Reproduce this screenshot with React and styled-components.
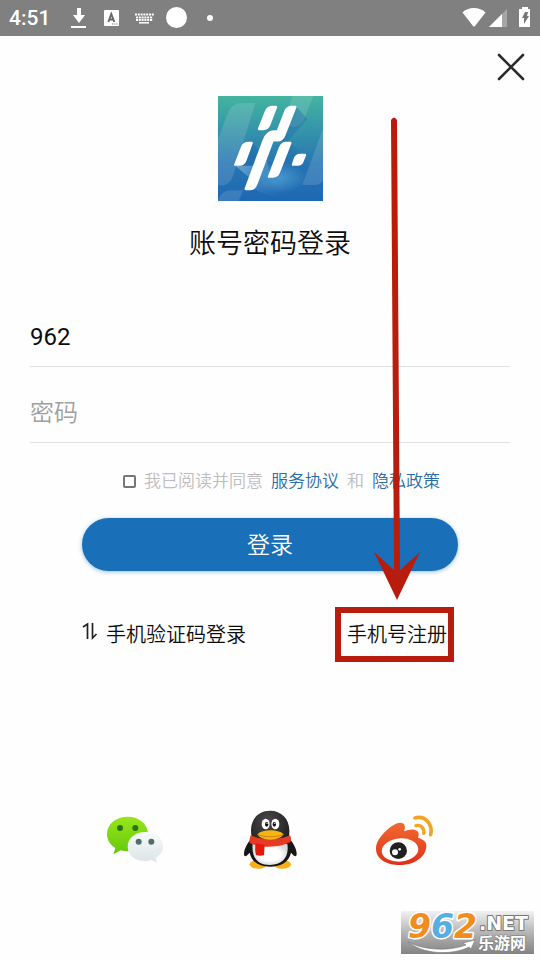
import React, { useState } from 'react'
import styled, { createGlobalStyle } from 'styled-components'

const theme = {
  primary: '#1a70b8',
  link: '#2a6ca5',
  text: '#0c0c0c',
  muted: '#bdbdbd',
  line: '#e2e2e2',
  mark: '#b81c0d',
}

const GlobalStyle = createGlobalStyle`
  * {
    box-sizing: border-box;
  }
  body {
    margin: 0;
    background: #fefefe;
    color: ${theme.text};
    font-family: Roboto, 'Noto Sans CJK SC', sans-serif;
    font-weight: 350;
  }
  button, input {
    font-family: inherit;
    font-weight: inherit;
    color: inherit;
    margin: 0;
  }
`

const Page = styled.div`
  min-height: 100vh;
  display: flex;
  flex-direction: column;
`

const StatusBar = styled.header`
  height: 36px;
  padding: 0 8px;
  display: flex;
  align-items: center;
  justify-content: space-between;
  background: #808080;
  color: #fff;
`

const StatusGroup = styled.div`
  display: flex;
  align-items: center;
`

const Clock = styled.time`
  width: 56px;
  padding-left: 1px;
  font-size: 21px;
  line-height: 36px;
  font-weight: 500;
`

const TopBar = styled.div`
  display: flex;
  justify-content: flex-end;
  padding: 13px 11px 0;
`

const CloseButton = styled.button`
  width: 36px;
  height: 36px;
  padding: 0;
  border: 0;
  background: none;
  cursor: pointer;
`

const Main = styled.main`
  flex: 1;
  display: flex;
  flex-direction: column;
`

const Brand = styled.div`
  display: flex;
  flex-direction: column;
  align-items: center;
  margin-top: 11px;
`

const Title = styled.h1`
  margin: 23px 0 0;
  font-size: 27px;
  line-height: 40px;
  font-weight: inherit;
`

const Form = styled.form`
  display: flex;
  flex-direction: column;
  margin-top: 44px;
`

const Fields = styled.div`
  display: flex;
  flex-direction: column;
  gap: 17px;
  padding: 0 30px;
`

const Field = styled.input`
  width: 100%;
  height: 59px;
  padding: 0;
  border: 0;
  border-bottom: 1px solid ${theme.line};
  border-radius: 0;
  outline: 0;
  background: none;
  font-size: 24px;
  font-weight: 400;

  &::placeholder {
    color: #a0a0a0;
    font-weight: 350;
    opacity: 1;
  }
`

const Agreement = styled.div`
  display: flex;
  align-items: center;
  justify-content: flex-end;
  gap: 8px;
  margin-top: 26px;
  padding: 0 100px;
  font-size: 17px;
  line-height: 24px;
  color: ${theme.muted};
  white-space: nowrap;
`

const AgreementLabel = styled.label`
  display: flex;
  align-items: center;
  gap: 8px;
`

const Checkbox = styled.input`
  appearance: none;
  width: 13px;
  height: 13px;
  border: 2px solid #777;
  border-radius: 2px;
  background: ${props => (props.checked ? theme.primary : '#fff')};
`

const AgreementLink = styled.a`
  color: ${theme.link};
  text-decoration: none;
`

const SubmitButton = styled.button`
  height: 53px;
  margin: 25px 82px 0;
  padding: 0 0 3px;
  border: 0;
  border-radius: 27px;
  background: ${theme.primary};
  box-shadow: 0 1px 4px rgba(26, 112, 184, 0.45);
  color: #fff;
  font-size: 23px;
  cursor: pointer;
`

const Options = styled.div`
  display: flex;
  justify-content: space-between;
  margin-top: 49px;
  padding: 0 93px 0 82px;
`

const OptionLink = styled.a`
  position: relative;
  display: flex;
  align-items: center;
  gap: 8px;
  font-size: 20px;
  line-height: 30px;
  color: ${theme.text};
  text-decoration: none;
  white-space: nowrap;
`

const Highlight = styled.span`
  position: absolute;
  inset: -13px -7px -12px -12px;
  border: 6px solid ${theme.mark};
  pointer-events: none;
`

const Pointer = styled.svg`
  position: absolute;
  right: 26px;
  bottom: 49px;
  pointer-events: none;
`

const Social = styled.nav`
  display: grid;
  grid-template-columns: repeat(3, 1fr);
  justify-items: center;
  margin-top: 160px;
  padding: 0 12.5%;
`

const SocialButton = styled.button`
  width: 60px;
  height: 60px;
  padding: 0;
  border: 0;
  background: none;
  cursor: pointer;
`

const Footer = styled.footer`
  display: flex;
  justify-content: flex-end;
  margin-top: auto;
  padding: 0 6px 6px;
`

const DownloadIcon = () => (
  <svg width="40" height="36" viewBox="64 0 40 36" fill="#fff">
    <path d="M77 8h4v7h4l-6 8-6-8h4zM71 26h15v2H71z" />
  </svg>
)

const InputMethodIcon = () => (
  <svg width="26" height="36" viewBox="104 0 26 36">
    <rect x="104" y="10" width="15" height="16" rx="1" fill="#fff" />
    <path d="M108.300 22l3-8 3 8M109.500 19.500h4" fill="none" stroke="#666" strokeWidth="1.900" />
    <path d="M112 24h1.200m1 0h1.200m1 0h1.200" stroke="#777" strokeWidth="1.200" />
  </svg>
)

const KeyboardIcon = () => (
  <svg width="36" height="36" viewBox="130 0 36 36" fill="none" stroke="#fff">
    <path d="M135 14.500h19M136 17.500h17M136 20h17" strokeWidth="1.800" strokeDasharray="2 .8" />
    <path d="M139 22.800h10" strokeWidth="1.500" />
  </svg>
)

const DotsIcon = () => (
  <svg width="60" height="36" viewBox="166 0 60 36" fill="#fff">
    <circle cx="176.500" cy="17.500" r="10.500" />
    <circle cx="210" cy="18" r="3" />
  </svg>
)

const SignalIcons = () => (
  <svg width="72" height="36" viewBox="460 0 72 36">
    <path d="M462.500 12.500C468 6.500 480 6.500 485.500 12.500L475 26q-1 1-2 0z" fill="#fff" />
    <path d="M489 27l18-18v18z" fill="#a6a6a6" />
    <path d="M489 27l13-13v13z" fill="#fff" />
    <path d="M522 7h6v2h2v18h-11V9h3z" fill="#fff" />
    <path d="M525 12h3l-1 4h2l-5 8v-6h-2z" fill="#777" />
  </svg>
)

const CloseIcon = () => (
  <svg width="36" height="36" viewBox="0 0 36 36" stroke="#2b2b2b" strokeWidth="2.600" strokeLinecap="round">
    <path d="M6 6l24 24M30 6L6 30" />
  </svg>
)

const Logo = () => (
  <svg width="105" height="105" viewBox="36 33 315 315">
    <defs>
      <linearGradient id="logo-bg" x1="0" y1="0" x2="0" y2="1">
        <stop offset="0" stopColor="#43b49f" />
        <stop offset=".3" stopColor="#3697a9" />
        <stop offset=".65" stopColor="#2775b3" />
        <stop offset="1" stopColor="#1e68b2" />
      </linearGradient>
      <linearGradient id="logo-shade" x1="0" y1="0" x2="1" y2="1">
        <stop offset="0" stopColor="#1b64a7" stopOpacity=".7" />
        <stop offset="1" stopColor="#1b64a7" stopOpacity="0" />
      </linearGradient>
      <linearGradient id="logo-glow" x1="0" y1="0" x2="1" y2=".7">
        <stop offset="0" stopColor="#8dbfdd" stopOpacity=".75" />
        <stop offset="1" stopColor="#4d9bd0" stopOpacity="0" />
      </linearGradient>
      <radialGradient id="logo-light">
        <stop offset="0" stopColor="#58a7da" stopOpacity=".7" />
        <stop offset="1" stopColor="#58a7da" stopOpacity="0" />
      </radialGradient>
    </defs>
    <path fill="url(#logo-bg)" d="M36 33h315v315H36z" />
    <path fill="#fff" opacity=".13" d="M148 54H104c-18 0-32 13-40 34L36 163v138h10c18 0 28-10 35-28zM260 33h62l-26 65c-8 20-20 27-36 27h-34zM351 130l-62 170h35c12 0 20-4 27-12zM36 348c6-24 23-32 38-32h38l-14 32z" />
    <path fill="url(#logo-shade)" d="M270 64l34 38-62 70-24-10zM138 172l38 48-20 60-60-38zM254 172l64 68-80 60-48-24z" />
    <path fill="url(#logo-glow)" d="M88 242h60l-20 34zM140 312l42-88 10 50 60 34-40 30z" />
    <ellipse cx="222" cy="278" rx="80" ry="46" fill="url(#logo-light)" />
    <path
      fill="#fff"
      stroke="#fff"
      strokeWidth="7"
      strokeLinejoin="round"
      d="M210 66l-20 53c-4 11-11 13-18 13h-13l21-53c5-10 12-13 19-13zM268 66l-33 84c-5 13-11 16-21 16h-14l-49 131c-4 11-11 15-19 15h-13l54-146c8-20 17-27 32-27h10l23-60c5-10 12-13 19-13zM137 174l-19 52c-4 11-11 13-18 13H88l20-52c5-11 12-13 19-13zM253 174l-34 87c-4 12-11 14-18 14h-12l33-87c5-11 12-14 19-14zM297 210l-8 20c-3 8-9 9-14 9h-14l5-16c4-11 10-13 16-13z"
    />
  </svg>
)

const SwitchIcon = () => (
  <svg width="16" height="30" viewBox="0 0 16 30" fill="none" stroke="#222" strokeWidth="1.700">
    <path d="M1 7l4.500-3v15M10.500 3v15l4-4" />
  </svg>
)

const WechatIcon = () => (
  <svg width="60" height="60" viewBox="30 30 180 180">
    <defs>
      <linearGradient id="wx-green" x1="0" y1="0" x2="0" y2="1">
        <stop offset="0" stopColor="#99e51c" />
        <stop offset="1" stopColor="#62c90b" />
      </linearGradient>
      <linearGradient id="wx-white" x1="0" y1="0" x2="0" y2="1">
        <stop offset="0" stopColor="#f7fafb" />
        <stop offset="1" stopColor="#dce4e7" />
      </linearGradient>
    </defs>
    <path fill="url(#wx-green)" d="M98 50c-36 0-62 23-62 52 0 18 9 32 25 42l-6 19 22-12c7 2 14 3 22 3 35 0 60-23 60-52S133 50 98 50z" />
    <circle cx="75" cy="84" r="9" fill="#287316" />
    <circle cx="121" cy="84" r="9" fill="#287316" />
    <path fill="url(#wx-white)" d="M151 96c-31 0-53 19-53 44s22 43 53 43c7 0 13-1 19-3l16 8-4-15c14-8 22-19 22-33 0-25-22-44-53-44z" />
    <circle cx="131" cy="125" r="9" fill="#526c69" />
    <circle cx="169" cy="125" r="9" fill="#526c69" />
  </svg>
)

const QQIcon = () => (
  <svg width="60" height="60" viewBox="30 30 180 180">
    <defs>
      <radialGradient id="qq-black" cx=".45" cy=".2" r=".8">
        <stop offset="0" stopColor="#4b4b4b" />
        <stop offset=".7" stopColor="#161616" />
      </radialGradient>
      <radialGradient id="qq-belly">
        <stop offset=".6" stopColor="#fff" />
        <stop offset="1" stopColor="#dcdcdc" />
      </radialGradient>
    </defs>
    <ellipse cx="85" cy="193" rx="26" ry="13" fill="#f9ae12" />
    <ellipse cx="157" cy="193" rx="26" ry="13" fill="#f9ae12" />
    <path fill="url(#qq-black)" d="M120 32c-34 0-57 24-57 59 0 8 1 15 2 22-12 15-23 34-23 48 0 10 5 11 17-3 5 27 28 42 61 42s57-15 63-42c12 14 17 13 17 3 0-15-11-34-24-48 2-7 2-14 2-22 0-35-24-59-58-59z" />
    <path fill="url(#qq-belly)" d="M68 132c-4 40 14 63 52 63s58-24 52-63z" />
    <path fill="#e63b22" d="M62 106c26 14 88 15 118 0 4 8 4 15 1 20-30 17-88 19-122 3-1-8 0-15 3-23z" />
    <path fill="#e4190e" d="M77 130l27 4-2 32c-8 2-18 2-24-1-3-9-3-23-1-35z" />
    <ellipse cx="107" cy="72" rx="12" ry="16" fill="#fff" />
    <ellipse cx="136" cy="72" rx="12" ry="16" fill="#fff" />
    <ellipse cx="110" cy="73" rx="5" ry="7" fill="#111" />
    <ellipse cx="133" cy="73" rx="5" ry="7" fill="#111" />
    <circle cx="111" cy="70" r="2" fill="#fff" />
    <circle cx="134" cy="70" r="2" fill="#fff" />
    <path fill="#f9b414" d="M82 103c9-9 24-12 39-12s31 3 40 12c-8 11-22 16-40 16s-33-5-39-16z" />
    <path fill="none" stroke="#b46b08" strokeWidth="2" d="M84 104c21 8 52 9 75 0" />
  </svg>
)

const WeiboIcon = () => (
  <svg width="60" height="60" viewBox="30 30 180 180">
    <defs>
      <linearGradient id="wb-red" x1="0" y1="0" x2="0" y2="1">
        <stop offset="0" stopColor="#f26a31" />
        <stop offset="1" stopColor="#df3019" />
      </linearGradient>
    </defs>
    <path fill="url(#wb-red)" d="M113 70c8 4 8 14 4 24 13-6 31-9 40-1 5 5 5 12 2 20 13 4 25 10 25 25 0 31-34 57-78 57-43 0-73-19-73-49 0-20 14-39 32-55 17-15 36-27 48-21z" />
    <ellipse cx="105" cy="150" rx="55" ry="35" fill="#fff" transform="rotate(-5 105 150)" />
    <ellipse cx="100" cy="152" rx="26" ry="25" fill="#202020" />
    <circle cx="90" cy="157" r="9" fill="#fff" />
    <circle cx="104" cy="148" r="4" fill="#fff" />
    <path fill="none" stroke="#f3a325" strokeWidth="11" strokeLinecap="round" d="M150 54c30-8 54 18 47 50" />
    <path fill="none" stroke="#f3a325" strokeWidth="10" strokeLinecap="round" d="M153 77c15-4 26 9 23 23" />
  </svg>
)

const SiteMark = () => (
  <svg width="133" height="50" viewBox="0 -7 133 50" role="img" aria-label="962.NET 乐游网">
    <defs>
      <linearGradient id="mark-bg" x1="0" y1="0" x2="0" y2="1">
        <stop offset="0" stopColor="#f2f2f2" />
        <stop offset=".5" stopColor="#b5b5b5" />
        <stop offset="1" stopColor="#838383" />
      </linearGradient>
    </defs>
    <path fill="url(#mark-bg)" d="M0 0h133v43H0z" />
    <g fontFamily="DejaVu Sans" fontWeight="700" stroke="#fff" paintOrder="stroke" strokeLinejoin="round">
      <text x="7" y="27" fontSize="33" fontStyle="italic" strokeWidth="3">
        <tspan fill="#f28c1e">9</tspan>
        <tspan fill="#58aee0">6</tspan>
        <tspan fill="#f28c1e">2</tspan>
      </text>
      <text x="78" y="19" fontSize="19" fill="#fff" stroke="#777" strokeWidth="2">.NET</text>
    </g>
    <text x="77" y="38" fontSize="16" fontWeight="700" fontFamily="Noto Sans CJK SC" fill="#fff" stroke="#777" strokeWidth="1" paintOrder="stroke">
      乐游网
    </text>
    <path fill="#fff" stroke="#777" strokeWidth=".6" d="M7 31c18 9 42 9 58 3l-3-2 12-3-4 9-2-2C50 45 22 43 7 31z" />
  </svg>
)

const accounts = [
  { name: '微信登录', Icon: WechatIcon },
  { name: 'QQ登录', Icon: QQIcon },
  { name: '微博登录', Icon: WeiboIcon },
]

const App = () => {
  const [account, setAccount] = useState('962')
  const [password, setPassword] = useState('')
  const [agreed, setAgreed] = useState(false)

  return (
    <Page>
      <GlobalStyle />
      <StatusBar>
        <StatusGroup>
          <Clock>4:51</Clock>
          <DownloadIcon />
          <InputMethodIcon />
          <KeyboardIcon />
          <DotsIcon />
        </StatusGroup>
        <SignalIcons />
      </StatusBar>
      <Main>
        <TopBar>
          <CloseButton type="button" aria-label="关闭">
            <CloseIcon />
          </CloseButton>
        </TopBar>
        <Brand>
          <Logo />
          <Title>账号密码登录</Title>
        </Brand>
        <Form onSubmit={e => e.preventDefault()}>
          <Fields>
            <Field aria-label="账号" value={account} onChange={e => setAccount(e.target.value)} />
            <Field
              type="password"
              aria-label="密码"
              placeholder="密码"
              value={password}
              onChange={e => setPassword(e.target.value)}
            />
          </Fields>
          <Agreement>
            <AgreementLabel>
              <Checkbox type="checkbox" checked={agreed} onChange={e => setAgreed(e.target.checked)} />
              我已阅读并同意
            </AgreementLabel>
            <AgreementLink href="#service">服务协议</AgreementLink>
            <span>和</span>
            <AgreementLink href="#privacy">隐私政策</AgreementLink>
          </Agreement>
          <SubmitButton type="submit">登录</SubmitButton>
        </Form>
        <Options>
          <OptionLink href="#sms">
            <SwitchIcon />
            手机验证码登录
          </OptionLink>
          <OptionLink href="#register">
            手机号注册
            <Highlight />
            <Pointer width="48" height="484" viewBox="373 118 48 484" fill={theme.mark}>
              <path d="M391 121q3-5 6 0l3 450 20-18-23 48-23-48 20 18z" />
            </Pointer>
          </OptionLink>
        </Options>
        <Social>
          {accounts.map(({ name, Icon }) => (
            <SocialButton key={name} type="button" aria-label={name}>
              <Icon />
            </SocialButton>
          ))}
        </Social>
      </Main>
      <Footer>
        <SiteMark />
      </Footer>
    </Page>
  )
}

export default App
